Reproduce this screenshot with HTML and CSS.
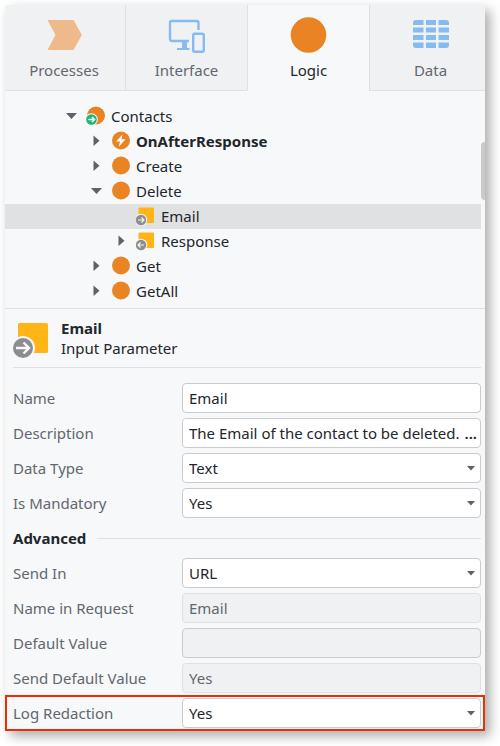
FILE: index.html
```html
<!DOCTYPE html>
<html lang="en">
<head>
<meta charset="utf-8">
<title>Logic - Email</title>
<link rel="stylesheet" href="styles.css">
</head>
<body>
<svg class="symbols" aria-hidden="true">
  <symbol id="open" viewBox="0 0 20 20"><path d="M5 7H16L10.5 13Z" fill="#5b6269"/></symbol>
  <symbol id="closed" viewBox="0 0 20 20"><path d="M7.500 4.500V15L13.500 9.800Z" fill="#5b6269"/></symbol>
  <symbol id="action" viewBox="0 0 20 20"><circle cx="10" cy="9.500" r="9" fill="#e98324"/></symbol>
  <symbol id="event" viewBox="0 0 20 20"><circle cx="10" cy="9.500" r="9" fill="#e98324"/><path d="M11.500 3.500L5.200 10.500H9L7.800 15.700L14.500 8.300H10.500Z" fill="#fff"/></symbol>
  <symbol id="service" viewBox="0 0 20 20"><circle cx="10" cy="9.500" r="9" fill="#e98324"/><circle cx="5.500" cy="13.500" r="6.300" fill="#f7f8fa"/><circle cx="5.500" cy="13.500" r="5.300" fill="#1fb67b"/><path d="M2.500 13.500H8M6 11L8.500 13.500L6 16" fill="none" stroke="#fff" stroke-width="1.500"/></symbol>
  <symbol id="input" viewBox="0 0 20 20"><rect x="2.500" y="1.500" width="15.500" height="15.500" rx="1" fill="#ffb515"/><circle cx="5" cy="14" r="6.200" fill="#f1f2f3"/><circle cx="5" cy="14" r="5.200" fill="#8b8d90"/><path d="M2 14H7.500M5.500 11.500L8 14L5.500 16.500" fill="none" stroke="#f4f4f4" stroke-width="1.200"/></symbol>
  <symbol id="output" viewBox="0 0 20 20"><rect x="2.500" y="1.500" width="15.500" height="15.500" rx="1" fill="#ffb515"/><circle cx="5" cy="14" r="6.200" fill="#f7f8fa"/><circle cx="5" cy="14" r="5.200" fill="#8b8d90"/><path d="M8 14H2.500M4.500 11.500L2 14L4.500 16.500" fill="none" stroke="#f4f4f4" stroke-width="1.200"/></symbol>
  <symbol id="caret" viewBox="0 0 8 6"><path d="M0 1H8L4 5.500Z" fill="#5b6269"/></symbol>
</svg>
<main class="panel">
  <div class="clip">
    <nav class="tabs">
      <button class="tab" type="button">
        <svg class="tab-icon" viewBox="0 0 40 40"><path d="M4.500 5H29.500L37.800 20L29.500 35H4.500Q3.300 35 4 34L11.500 20L4 6Q3.300 5 4.500 5Z" fill="#eeba8b"/></svg>
        <span>Processes</span>
      </button>
      <button class="tab" type="button">
        <svg class="tab-icon" viewBox="0 0 40 40"><path d="M22 26H5Q3 26 3 24V8Q3 6 5 6H29.500Q31.500 6 31.500 8V15" fill="none" stroke="#86bbf2" stroke-width="2.400"/><path d="M15 26H20V33H22.500V35H10V33H15Z" fill="#86bbf2"/><rect x="26.200" y="18.700" width="10.600" height="18" rx="1.500" fill="none" stroke="#86bbf2" stroke-width="2.400"/></svg>
        <span>Interface</span>
      </button>
      <button class="tab active" type="button">
        <svg class="tab-icon" viewBox="0 0 40 40"><circle cx="19.500" cy="20" r="17.800" fill="#e98324"/></svg>
        <span>Logic</span>
      </button>
      <button class="tab" type="button">
        <svg class="tab-icon" viewBox="0 0 40 40"><g fill="#86bbf2"><path d="M5 5H12.500V10H2V8Q2 5 5 5ZM15 5H25V10H15ZM27.500 5H35Q38 5 38 8V10H27.500ZM2 12.500H12.500V17.500H2ZM15 12.500H25V17.500H15ZM27.500 12.500H38V17.500H27.500ZM2 20H12.500V25H2ZM15 20H25V25H15ZM27.500 20H38V25H27.500ZM2 27.500H12.500V33H5Q2 33 2 30ZM15 27.500H25V33H15ZM27.500 27.500H38V30Q38 33 35 33H27.500Z"/></g></svg>
        <span>Data</span>
      </button>
    </nav>
    <section class="tree">
      <ul>
        <li><button class="node" type="button"><svg><use href="#open"/></svg><svg><use href="#service"/></svg>Contacts</button>
          <ul>
            <li><button class="node level1 strong" type="button"><svg><use href="#closed"/></svg><svg><use href="#event"/></svg>OnAfterResponse</button></li>
            <li><button class="node level1" type="button"><svg><use href="#closed"/></svg><svg><use href="#action"/></svg>Create</button></li>
            <li><button class="node level1" type="button"><svg><use href="#open"/></svg><svg><use href="#action"/></svg>Delete</button>
              <ul>
                <li><button class="node level2 selected" type="button"><svg></svg><svg><use href="#input"/></svg>Email</button></li>
                <li><button class="node level2" type="button"><svg><use href="#closed"/></svg><svg><use href="#output"/></svg>Response</button></li>
              </ul>
            </li>
            <li><button class="node level1" type="button"><svg><use href="#closed"/></svg><svg><use href="#action"/></svg>Get</button></li>
            <li><button class="node level1" type="button"><svg><use href="#closed"/></svg><svg><use href="#action"/></svg>GetAll</button></li>
          </ul>
        </li>
      </ul>
      <div class="thumb"></div>
    </section>
    <section class="properties">
      <header class="heading">
        <svg class="heading-icon" viewBox="0 0 38 40"><rect x="5" y="5" width="30" height="30" rx="1.500" fill="#ffb515"/><circle cx="10" cy="30" r="12" fill="#f7f8fa"/><circle cx="10" cy="30" r="10" fill="#8b8d90"/><path d="M3 30H15.500M10.500 24.500L16 30L10.500 35.500" fill="none" stroke="#f7f8fa" stroke-width="2.400"/></svg>
        <div>
          <h1>Email</h1>
          <p>Input Parameter</p>
        </div>
      </header>
      <form class="fields">
        <div class="field"><label for="name">Name</label><input id="name" value="Email"></div>
        <div class="field"><label for="description">Description</label>
          <div class="with-button"><input id="description" value="The Email of the contact to be deleted."><button class="more" type="button">...</button></div></div>
        <div class="field"><label for="type">Data Type</label>
          <div class="select"><select id="type"><option>Text</option></select><svg><use href="#caret"/></svg></div></div>
        <div class="field"><label for="mandatory">Is Mandatory</label>
          <div class="select"><select id="mandatory"><option>Yes</option><option>No</option></select><svg><use href="#caret"/></svg></div></div>
        <h2 class="group">Advanced</h2>
        <div class="field"><label for="send">Send In</label>
          <div class="select"><select id="send"><option>URL</option></select><svg><use href="#caret"/></svg></div></div>
        <div class="field"><label for="request">Name in Request</label><input id="request" value="Email" disabled></div>
        <div class="field"><label for="default">Default Value</label><input id="default" class="muted"></div>
        <div class="field"><label for="senddefault">Send Default Value</label><input id="senddefault" value="Yes" disabled></div>
        <div class="field highlight"><label for="log">Log Redaction</label>
          <div class="select"><select id="log"><option>Yes</option><option>No</option></select><svg><use href="#caret"/></svg></div></div>
      </form>
    </section>
  </div>
</main>
</body>
</html>
```
FILE: styles.css
```css
* { box-sizing: border-box; }

body {
  margin: 0;
  padding: 5px 15px 15px 5px;
  background: #fff;
  color: #22262b;
  font: 15px/20px "Noto Sans", sans-serif;
}

button, input, select { font: inherit; color: inherit; }
button { border: 0; background: none; }
ul { margin: 0; padding: 0; list-style: none; }
h1, h2, p { margin: 0; font-size: 15px; line-height: 20px; }

.symbols { display: none; }

.panel {
  background: #f7f8fa;
  box-shadow: 5px 5px 11px rgba(0, 0, 0, 0.33);
}
.clip { overflow: hidden; }

.tabs {
  display: grid;
  grid-template-columns: repeat(4, 1fr);
  margin: 0 -6px 0 -2px;
}
.tab {
  display: flex;
  flex-direction: column;
  align-items: center;
  gap: 5px;
  padding: 10px 0;
  background: #f0f1f3;
  border-bottom: 1px solid #dee0e3;
  color: #62676d;
}
.tab + .tab { border-left: 1px solid #dee0e3; }
.tab.active {
  background: #f7f8fa;
  border-bottom-color: #f7f8fa;
  color: #22262b;
}
.tab-icon { width: 40px; height: 40px; }

.tree {
  position: relative;
  padding: 13px 4px 4px 0;
  border-bottom: 1px solid #dee0e3;
}
.node {
  display: flex;
  align-items: center;
  gap: 5px;
  width: 100%;
  height: 25px;
  padding: 0 0 1px 56px;
  text-align: left;
}
.node svg { flex: none; width: 20px; height: 20px; }
.level1 { padding-left: 81px; }
.level2 { padding-left: 106px; }
.strong { font-weight: 700; }
.selected { background: #e0e1e3; }
.thumb {
  position: absolute;
  top: 51px;
  right: 0;
  width: 4px;
  height: 58px;
  border-radius: 4px 0 0 4px;
  background: #c9cacc;
}

.properties { padding: 0 4px 0 8px; }
.heading {
  display: flex;
  gap: 10px;
  padding: 9px 0;
  border-bottom: 1px solid #dee0e3;
}
.heading-icon { width: 38px; height: 40px; }

.fields {
  display: flex;
  flex-direction: column;
  gap: 5px;
  padding-top: 15px;
}
.field {
  display: grid;
  grid-template-columns: 169px minmax(0, 1fr);
  align-items: center;
}
label { color: #62676d; }

input, select {
  width: 100%;
  height: 30px;
  padding: 0 6px;
  border: 1px solid #c9cbcf;
  border-radius: 4px;
  background: #fff;
  appearance: none;
}
input:disabled {
  border-color: #dee0e3;
  background: #f0f1f3;
  color: #62676d;
}
.muted { background: #f0f1f3; }

.with-button {
  display: flex;
  height: 30px;
  border: 1px solid #c9cbcf;
  border-radius: 4px;
  background: #fff;
}
.with-button input {
  height: 28px;
  padding-right: 0;
  border: 0;
}
.more { padding: 0 3px; font-weight: 600; }

.select { display: grid; align-items: center; }
.select select, .select svg { grid-area: 1 / 1; }
.select svg {
  justify-self: end;
  width: 8px;
  height: 6px;
  margin-right: 6px;
  pointer-events: none;
}

.group {
  display: flex;
  align-items: center;
  gap: 11px;
  height: 30px;
}
.group::after {
  content: "";
  flex: 1;
  height: 1px;
  background: #dee0e3;
}

.highlight {
  margin: -3px -4px 0 -8px;
  padding: 1px 2px 1px 6px;
  border: 2px solid #f22b05;
}
```
